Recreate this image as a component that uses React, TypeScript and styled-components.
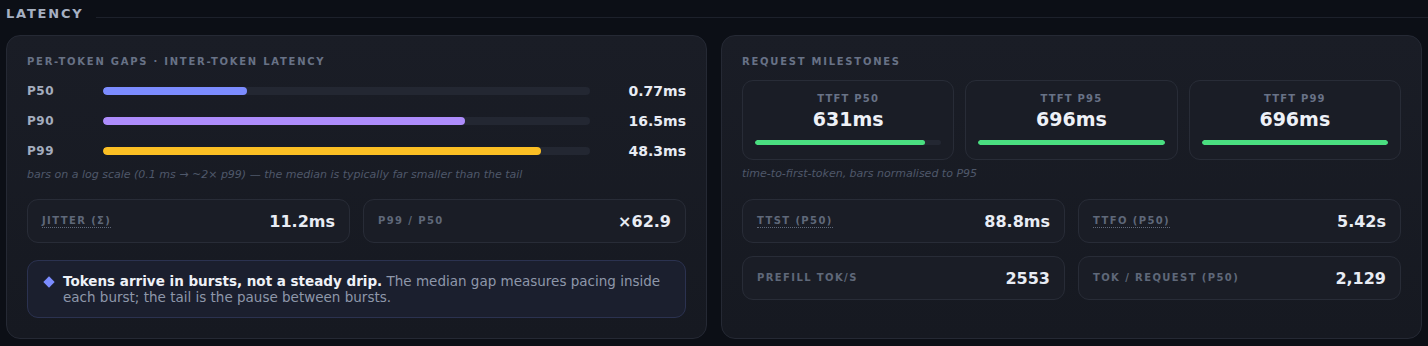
import React from 'react';
import styled, { createGlobalStyle } from 'styled-components';

const GlobalStyle = createGlobalStyle`
  html, body {
    margin: 0;
    padding: 0;
    background: #0c0f16;
    font-family: 'DejaVu Sans', 'Liberation Sans', sans-serif;
  }
`;

const Page = styled.div`
  width: 1428px;
  height: 346px;
  box-sizing: border-box;
  padding: 3px 6px 7px 6px;
  display: flex;
  flex-direction: column;
  gap: 12px;
`;

const SectionHeader = styled.div`
  display: flex;
  align-items: center;
  gap: 12px;
  height: 20px;
  margin-right: -6px;
`;

const SectionTitle = styled.h2`
  margin: 0;
  font-size: 13px;
  font-weight: 700;
  letter-spacing: 1.8px;
  color: #a6b0c2;
`;

const SectionRule = styled.div`
  flex: 1;
  height: 1px;
  background: #1d212b;
  margin-top: 8px;
`;

const Columns = styled.div`
  flex: 1;
  display: grid;
  grid-template-columns: 1fr 1fr;
  gap: 14px;
`;

const Panel = styled.section`
  box-sizing: border-box;
  border: 1px solid #252934;
  border-radius: 14px;
  background: linear-gradient(180deg, #1a1d26 0%, #161921 100%);
  padding: 20px;
  display: flex;
  flex-direction: column;
`;

const PanelTitle = styled.h3`
  margin: 0;
  font-size: 10px;
  line-height: 12px;
  font-weight: 700;
  letter-spacing: 1.75px;
  color: #687286;
`;

const Rows = styled.div`
  margin-top: 8px;
  display: flex;
  flex-direction: column;
`;

const Row = styled.div`
  height: 30px;
  display: grid;
  grid-template-columns: 76px 1fr 96px;
  align-items: center;
`;

const RowLabel = styled.span`
  font-size: 12px;
  font-weight: 700;
  letter-spacing: 0.5px;
  color: #a3acbd;
`;

const Track = styled.div<{ $h: number }>`
  height: ${p => p.$h}px;
  border-radius: ${p => p.$h}px;
  background: #232732;
  overflow: hidden;
`;

const Fill = styled.div<{ $color: string; $h: number }>`
  height: 100%;
  border-radius: ${p => p.$h}px;
  background: ${p => p.$color};
`;

const RowValue = styled.span`
  text-align: right;
  font-size: 14px;
  font-weight: 700;
  color: #e8ecf4;
`;

const Caption = styled.p<{ $top: number }>`
  margin: ${p => p.$top}px 0 0 0;
  font-size: 11px;
  line-height: 14px;
  font-style: italic;
  color: #4f586a;
`;

const StatGrid = styled.div<{ $top: number }>`
  margin-top: ${p => p.$top}px;
  display: grid;
  grid-template-columns: 1fr 1fr;
  gap: 13px;
`;

const StatCard = styled.div`
  box-sizing: border-box;
  height: 44px;
  border: 1px solid #282c37;
  border-radius: 11px;
  background: #1a1d26;
  padding: 0 14px;
  display: flex;
  align-items: center;
  justify-content: space-between;
`;

const StatLabel = styled.span<{ $dotted?: boolean }>`
  font-size: 10px;
  font-weight: 700;
  letter-spacing: 1.4px;
  color: #5f6879;
  padding-bottom: 1px;
  border-bottom: ${p => (p.$dotted ? '1px dotted #5f6879' : '1px solid transparent')};
`;

const StatValue = styled.span`
  font-size: 16px;
  font-weight: 700;
  color: #e8ecf4;
`;

const Callout = styled.div`
  box-sizing: border-box;
  margin-top: 17px;
  height: 58px;
  border: 1px solid #2b3250;
  border-radius: 11px;
  background: #1b1f2e;
  padding: 12px 16px 0 14px;
  display: flex;
  gap: 10px;
`;

const Diamond = styled.span`
  flex: none;
  width: 8px;
  height: 8px;
  margin: 5px 0 0 3px;
  background: #7b8cff;
  transform: rotate(45deg);
`;

const CalloutText = styled.p`
  margin: 0;
  font-size: 13.5px;
  line-height: 16px;
  color: #8e97aa;

  strong {
    color: #eef1f7;
    font-weight: 700;
  }
`;

const Milestones = styled.div`
  margin-top: 12px;
  display: grid;
  grid-template-columns: repeat(3, 1fr);
  gap: 11px;
`;

const MilestoneCard = styled.div`
  box-sizing: border-box;
  height: 80px;
  border: 1px solid #282c37;
  border-radius: 11px;
  background: #1a1d26;
  padding: 11px 12px 0 12px;
  display: flex;
  flex-direction: column;
  align-items: stretch;
  text-align: center;
`;

const MilestoneLabel = styled.span`
  font-size: 10px;
  line-height: 13px;
  font-weight: 700;
  letter-spacing: 1.2px;
  color: #687286;
`;

const MilestoneValue = styled.span`
  margin-top: 2px;
  font-size: 19px;
  line-height: 24px;
  font-weight: 700;
  color: #eef1f7;
`;

const MilestoneBar = styled.div`
  margin-top: 9px;
`;

const gaps = [
  { label: 'P50', pct: 29.6, color: '#7c8cff', value: '0.77ms' },
  { label: 'P90', pct: 74.3, color: '#ad8cfb', value: '16.5ms' },
  { label: 'P99', pct: 90, color: '#fbbf24', value: '48.3ms' },
];

const ttft = [
  { label: 'TTFT P50', value: '631ms', pct: 91.4 },
  { label: 'TTFT P95', value: '696ms', pct: 100 },
  { label: 'TTFT P99', value: '696ms', pct: 100 },
];

const milestoneStats = [
  { label: 'TTST (P50)', value: '88.8ms', dotted: true },
  { label: 'TTFO (P50)', value: '5.42s', dotted: true },
  { label: 'PREFILL TOK/S', value: '2553', dotted: false },
  { label: 'TOK / REQUEST (P50)', value: '2,129', dotted: false },
];

export default function App() {
  return (
    <>
      <GlobalStyle />
      <Page>
        <SectionHeader>
          <SectionTitle>LATENCY</SectionTitle>
          <SectionRule />
        </SectionHeader>
        <Columns>
          <Panel>
            <PanelTitle>PER-TOKEN GAPS · INTER-TOKEN LATENCY</PanelTitle>
            <Rows>
              {gaps.map(g => (
                <Row key={g.label}>
                  <RowLabel>{g.label}</RowLabel>
                  <Track $h={8}>
                    <Fill $h={8} $color={g.color} style={{ width: `${g.pct}%` }} />
                  </Track>
                  <RowValue>{g.value}</RowValue>
                </Row>
              ))}
            </Rows>
            <Caption $top={2}>
              bars on a log scale (0.1 ms → ~2× p99) — the median is typically far smaller than the tail
            </Caption>
            <StatGrid $top={17}>
              <StatCard>
                <StatLabel $dotted>JITTER (Σ)</StatLabel>
                <StatValue>11.2ms</StatValue>
              </StatCard>
              <StatCard>
                <StatLabel>P99 / P50</StatLabel>
                <StatValue>×62.9</StatValue>
              </StatCard>
            </StatGrid>
            <Callout>
              <Diamond />
              <CalloutText>
                <strong>Tokens arrive in bursts, not a steady drip.</strong> The median gap measures pacing inside
                each burst; the tail is the pause between bursts.
              </CalloutText>
            </Callout>
          </Panel>
          <Panel>
            <PanelTitle>REQUEST MILESTONES</PanelTitle>
            <Milestones>
              {ttft.map(t => (
                <MilestoneCard key={t.label}>
                  <MilestoneLabel>{t.label}</MilestoneLabel>
                  <MilestoneValue>{t.value}</MilestoneValue>
                  <MilestoneBar>
                    <Track $h={5}>
                      <Fill $h={5} $color="#4ade80" style={{ width: `${t.pct}%` }} />
                    </Track>
                  </MilestoneBar>
                </MilestoneCard>
              ))}
            </Milestones>
            <Caption $top={7}>time-to-first-token, bars normalised to P95</Caption>
            <StatGrid $top={18}>
              {milestoneStats.map(s => (
                <StatCard key={s.label}>
                  <StatLabel $dotted={s.dotted}>{s.label}</StatLabel>
                  <StatValue>{s.value}</StatValue>
                </StatCard>
              ))}
            </StatGrid>
          </Panel>
        </Columns>
      </Page>
    </>
  );
}
